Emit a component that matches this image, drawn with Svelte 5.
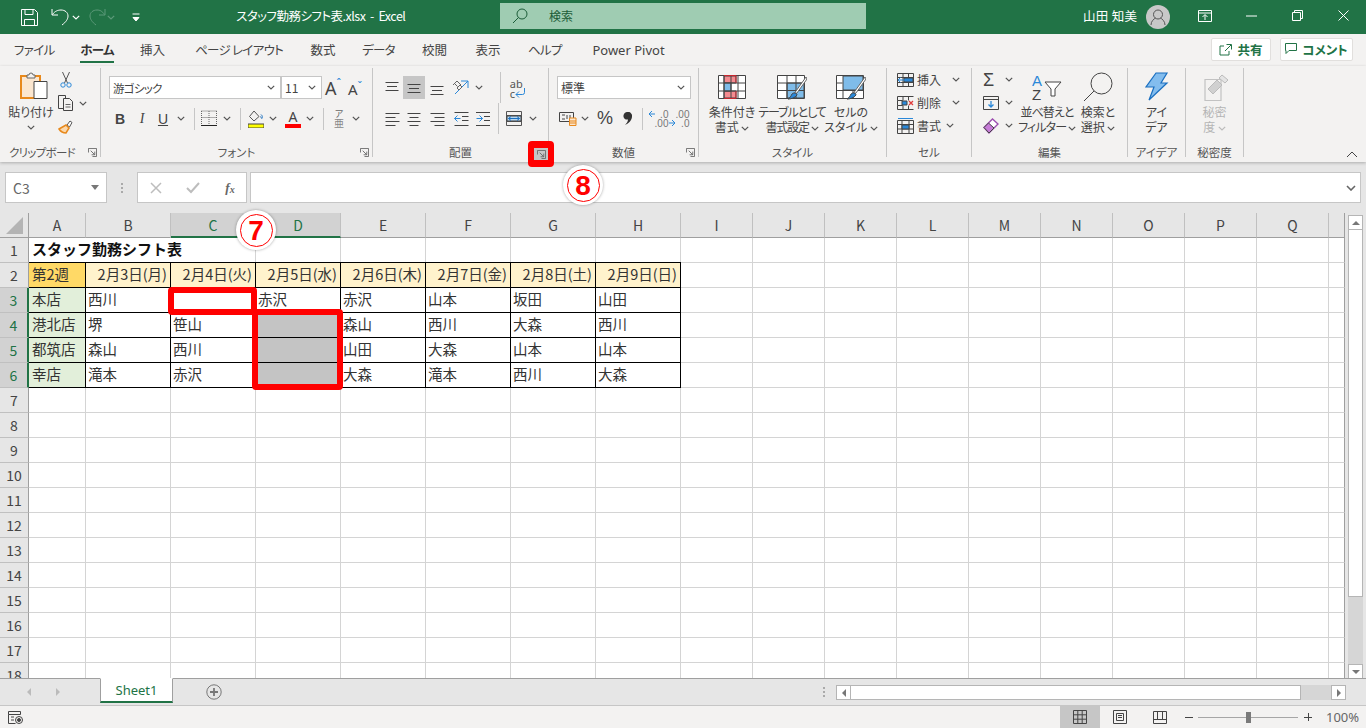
<script>
  const tabs = ['ファイル', 'ホーム', '挿入', 'ページ レイアウト', '数式', 'データ', '校閲', '表示', 'ヘルプ', 'Power Pivot'];
  const cols = 'ABCDEFGHIJKLMNOPQ '.split('');
  const rows = Array.from({ length: 18 }, (_, i) => i + 1);

  const table = {
    2: ['第2週', '2月3日(月)', '2月4日(火)', '2月5日(水)', '2月6日(木)', '2月7日(金)', '2月8日(土)', '2月9日(日)'],
    3: ['本店', '西川', '', '赤沢', '赤沢', '山本', '坂田', '山田'],
    4: ['港北店', '堺', '笹山', '', '森山', '西川', '大森', '西川'],
    5: ['都筑店', '森山', '西川', '', '山田', '大森', '山本', '山本'],
    6: ['幸店', '滝本', '赤沢', '', '大森', '滝本', '西川', '大森']
  };

  const cellClass = (r, c) => {
    if (!table[r] || c > 7) return '';
    let cls = 'b';
    if (r === 2) cls += c === 0 ? ' wk' : ' dt';
    else if (c === 0) cls += ' st';
    else if (c === 3 && r > 3) cls += ' gr';
    return cls;
  };
</script>

{#snippet chev(cls = '')}
  <svg class="chev {cls}" width="8" height="5" viewBox="0 0 8 5"><path d="M.8.8 4 4 7.2.8" /></svg>
{/snippet}

{#snippet launcher()}
  <svg class="launch" width="9" height="9" viewBox="0 0 10 10"><path d="M.5 5V.5h9v9H5M3 3l4.500 4.500M7.500 4v3.500H4" /></svg>
{/snippet}

{#snippet lines(kind)}
  <svg width="16" height="16" viewBox="0 0 16 16" class="ln">
    {#if kind === 'top'}<path d="M1.500 2.500h13M3 6.500h10M1.500 10.500h13" />{/if}
    {#if kind === 'mid'}<path d="M1.500 4.500h13M3 8.500h10M1.500 12.500h13" />{/if}
    {#if kind === 'bot'}<path d="M1.500 6.500h13M3 10.500h10M1.500 14.500h13" />{/if}
    {#if kind === 'l'}<path d="M1.500 2.500h14M1.500 6.500h10M1.500 10.500h14M1.500 14.500h10" />{/if}
    {#if kind === 'c'}<path d="M1.500 2.500h13M3.500 6.500h9M1.500 10.500h13M3.500 14.500h9" />{/if}
    {#if kind === 'r'}<path d="M1.500 2.500h14M5.500 6.500h10M1.500 10.500h14M5.500 14.500h10" />{/if}
  </svg>
{/snippet}

<div class="app">
  <header class="titlebar">
    <div class="qat">
      <svg class="save" width="17" height="17" viewBox="0 0 17 17"><path d="M.5.500h13l3 3v13H.5zM4 .5v5h8v-5M3.500 16.500v-6h10v6" /></svg>
      <svg class="undo" width="20" height="18" viewBox="0 0 20 18"><path d="M1 1v6h6M1.500 6.500C4 3 7 2 10 2c4 0 7 2.500 7 6 0 3-2 6-6 9" /></svg>
      {@render chev('white')}
      <svg class="redo" width="17" height="18" viewBox="0 0 17 18"><path d="M16 1v6h-6M15.500 6.500C13 3 11 2 8 2 4 2 1 4.500 1 8c0 3 2 6 6 9" /></svg>
      {@render chev('dim')}
      <svg class="cust" width="8" height="9" viewBox="0 0 8 9"><path d="M.5 1h7" /><path d="M1 4.500 4 8l3-3.500z" fill="#fff" /></svg>
    </div>
    <div class="doc">スタッフ勤務シフト表.xlsx&nbsp; - &nbsp;Excel</div>
    <div class="search">
      <svg width="16" height="16" viewBox="0 0 16 16"><circle cx="10" cy="6" r="5" /><path d="M6.500 9.500 1 15" /></svg>
      <span>検索</span>
    </div>
    <div class="user">山田 知美</div>
    <div class="avatar">
      <svg width="16" height="16" viewBox="0 0 16 16"><circle cx="8" cy="5.500" r="4.500" /><path d="M1 16c0-4 3-6 4.500-7M15 16c0-4-3-6-4.500-7" /></svg>
    </div>
    <div class="winbtns">
      <svg width="14" height="12" viewBox="0 0 14 12"><path d="M.5.500h13v11H.5zM.5 3h13M7 10V5M4.500 7 7 4.500 9.500 7" /></svg>
      <svg width="11" height="2" viewBox="0 0 11 2"><path d="M0 1h11" /></svg>
      <svg width="11" height="11" viewBox="0 0 11 11"><path d="M.5 2.500h8v8h-8zM2.500 2.500v-2h8v8h-2" /></svg>
      <svg width="11" height="11" viewBox="0 0 11 11"><path d="M.5.500l10 10M10.500.500l-10 10" /></svg>
    </div>
  </header>

  <nav class="tabs">
    {#each tabs as t, i}
      <span class="tab t{i}" class:on={t === 'ホーム'}>{t}</span>
    {/each}
    <div class="share">
      <button class="pill">
        <svg width="13" height="13" viewBox="0 0 13 13"><path d="M7.500 1.500h5v5M12 2 6 8M5 3H1v9h9V8" /></svg>共有
      </button>
      <button class="pill cm">
        <svg width="12" height="12" viewBox="0 0 12 12"><path d="M.5.500h11v7H4l-3 3v-3H.5z" /></svg>コメント
      </button>
    </div>
  </nav>

  <section class="ribbon">
    <div class="g clip">
      <div class="body">
        <div class="big paste">
          <svg width="28" height="30" viewBox="0 0 28 30">
            <path d="M1 4h19v22H1z" fill="#fbe6cf" stroke="#e8891c" stroke-width="2" />
            <path d="M7 4V3h2a2 2 0 0 1 4 0h2v3H7z" fill="#f3f2f1" stroke="#666" />
            <path d="M14 9.500h13v17H14z" fill="#fff" stroke="#444" />
          </svg>
          <span>貼り付け</span>
          {@render chev()}
        </div>
        <div class="cliptools">
          <svg class="scis" width="12" height="17" viewBox="0 0 12 17"><path d="M2.500 1l5 11M9.500 1l-5 11" stroke="#555" /><circle cx="3" cy="14" r="2.200" stroke="#2b88d8" /><circle cx="9" cy="14" r="2.200" stroke="#2b88d8" /></svg>
          <div class="copy">
            <svg width="16" height="16" viewBox="0 0 16 16"><path d="M5.500 13.500h-5v-13h7v3" stroke="#444" /><path d="M5.500 3.500h6l3 3v9h-9z" stroke="#444" fill="#f3f2f1" /><path d="M7.500 9.500h5M7.500 12h5" stroke="#666" /></svg>
            {@render chev()}
          </div>
          <svg width="16" height="16" viewBox="0 0 16 16"><path d="M9 7l3-4 2 1.500-2.500 4.500z" stroke="#555" fill="#fff" /><path d="M1 11l7-4 3 3-3 5c-3 0-5-1-7-4z" fill="#fbd8ac" stroke="#e8891c" stroke-width="1.500" /></svg>
        </div>
      </div>
      <div class="label">クリップボード{@render launcher()}</div>
    </div>

    <div class="g font">
      <div class="body rows">
        <div class="fr1">
          <div class="sel fname"><span>游ゴシック</span>{@render chev()}</div>
          <div class="sel fsize"><span>11</span>{@render chev()}</div>
          <span class="grow">A<sup>ˆ</sup></span>
          <span class="shrink">A<sup>ˇ</sup></span>
        </div>
        <div class="fr2">
          <b class="bi">B</b>
          <i class="bi it">I</i>
          <u class="bi un">U</u>
          {@render chev()}
          <i class="sep"></i>
          <svg width="16" height="17" viewBox="0 0 16 17"><path d="M.5 1h15M.5 1v13M15.500 1v13M8 1v13M.5 7.500h15" stroke="#666" stroke-dasharray="1 1" /><path d="M0 15.500h16" stroke="#222" stroke-width="1" /></svg>
          {@render chev()}
          <i class="sep"></i>
          <svg width="16" height="18" viewBox="0 0 16 18"><path d="M6 1 1.500 6.500 6 11l5-4.500z" stroke="#555" /><path d="M13 4.500c1.500 1 1.500 3 1 4-.5-.5-1.500-1-1.500-2" stroke="#1a6fc0" /><path d="M0 14h16v4H0z" fill="#ffff00" /></svg>
          {@render chev()}
          <span class="colora">A</span>
          {@render chev()}
          <i class="sep"></i>
          <span class="furi">ア<em>亜</em></span>
          {@render chev()}
        </div>
      </div>
      <div class="label">フォント{@render launcher()}</div>
    </div>

    <div class="g align">
      <div class="body rows">
        <div class="ar1">
          {@render lines('top')}
          <span class="hl">{@render lines('mid')}</span>
          {@render lines('bot')}
          <svg width="17" height="17" viewBox="0 0 17 17"><path d="M9 2h7v7M16 2 3 15" stroke="#2b88d8" /><path d="M1 6l4-4 4 4M2.500 4.500l3 3M5 9l3-3 2 2-3 3z" stroke="#666" /></svg>
          {@render chev()}
          <i class="sep tall"></i>
          <span class="wrap"><span>ab</span><span>c<svg width="11" height="10" viewBox="0 0 11 10"><path d="M9.500 0v4.500a2 2 0 0 1-2 2H1M4 3.500l-3 3 3 3" stroke="#2b88d8" /></svg></span></span>
        </div>
        <div class="ar2">
          {@render lines('l')}
          {@render lines('c')}
          {@render lines('r')}
          <svg width="15" height="14" viewBox="0 0 15 14"><path d="M.5.500h14M8 4.500h6.500M8 8.500h6.500M.5 13.500h14" stroke="#444" /><path d="M.5 6.500h6M3.500 3.500l-3 3 3 3" stroke="#2b88d8" /></svg>
          <svg width="15" height="14" viewBox="0 0 15 14"><path d="M0 .5h14M0 13.500h14M8 4.500h6M8 8.500h6" stroke="#444" /><path d="M.5 6.500h6M3.500 3.500l3 3-3 3" stroke="#2b88d8" /></svg>
          <i class="sep tall"></i>
          <svg width="16" height="15" viewBox="0 0 16 15"><path d="M.5.500h15v14H.5zM.5 4.500h15M.5 10.500h15" stroke="#555" /><path d="M1 5h14v5H1z" fill="#b6d8f3" /><path d="M2.500 7.500h11M5 5.500l-2.500 2 2.500 2M11 5.500l2.500 2-2.500 2" stroke="#1a6fc0" /></svg>
          {@render chev()}
        </div>
      </div>
      <div class="label">配置</div>
    </div>

    <div class="g num">
      <div class="body rows">
        <div class="sel nfmt"><span>標準</span>{@render chev()}</div>
        <div class="nr2">
          <svg width="18" height="15" viewBox="0 0 18 15"><path d="M.5 1.500h14v9H.5z" stroke="#444" /><path d="M3 4h3M3 8h3M8 4v4M11 4v4" stroke="#444" /><path d="M10.500 7h6.500v7.500h-6.500zM10.500 10h6.500M10.500 12h6.500" stroke="#e8891c" fill="#fbe6cf" /></svg>
          {@render chev()}
          <span class="pct">%</span>
          <svg width="9" height="13" viewBox="0 0 9 13"><path d="M4 0a4 4 0 0 1 5 4.500C9 8 6 11.500 2 13c1.500-1.500 3-3.500 3-5.500C2.500 8 0 6 .5 3.500.8 1.500 2.500 0 4 0z" fill="#333" stroke="none" /></svg>
          <i class="sep"></i>
          <span class="dec"><svg width="7" height="8" viewBox="0 0 7 8"><path d="M7 4H1M4 1 1 4l3 3" stroke="#2b88d8" /></svg><em>.0</em><em>.00</em></span>
          <span class="dec inc"><em>.00</em><svg width="7" height="8" viewBox="0 0 7 8"><path d="M0 4h6M3 1l3 3-3 3" stroke="#2b88d8" /></svg><em>.0</em></span>
        </div>
      </div>
      <div class="label">数値{@render launcher()}</div>
    </div>

    <div class="g style">
      <div class="body">
        <div class="big w54">
          <svg width="28" height="30" viewBox="0 0 28 30">
            <path d="M.5 3.500h27v23H.5z" fill="#fff" stroke="#444" />
            <path d="M6 4h12v7H6z M6 19h12v7H6z" fill="#f58b90" />
            <path d="M6 11h7v8H6z" fill="#7fbce9" />
            <path d="M6 3.500v23M13 3.500v23M20 3.500v23M.5 11h27M.5 19h27" stroke="#444" />
            <path d="M6 3.500h12v7.500M6 26.500h12V19" stroke="#c8272e" />
          </svg>
          <span>条件付き</span><span>書式 {@render chev()}</span>
        </div>
        <div class="big w66">
          <svg width="30" height="30" viewBox="0 0 30 30">
            <path d="M.5 3.500h27v23H.5z" fill="#fff" stroke="#444" />
            <path d="M10 11h17v15H10z" fill="#7fbce9" />
            <path d="M10 3.500v23M19 3.500v23M.5 11h27M.5 18.500h27" stroke="#444" />
            <path d="M29 5 19 19l-2 3 3-1L30 7z" fill="#fff" stroke="#666" />
            <path d="M15 22c2-2 5-1 5 1-2 3-6 4-9 4 2-1 3-3 4-5z" fill="#2b88d8" />
          </svg>
          <span>テーブルとして</span><span>書式設定 {@render chev()}</span>
        </div>
        <div class="big w52">
          <svg width="30" height="30" viewBox="0 0 30 30">
            <path d="M.5 3.500h27v23H.5z" fill="#fff" stroke="#444" />
            <path d="M7 4h20v14H7z" fill="#7fbce9" />
            <path d="M7 18.500v8M17 18.500v8M.5 11h6M.5 18.500h27" stroke="#444" />
            <path d="M29 5 19 19l-2 3 3-1L30 7z" fill="#fff" stroke="#666" />
            <path d="M15 22c2-2 5-1 5 1-2 3-6 4-9 4 2-1 3-3 4-5z" fill="#2b88d8" />
          </svg>
          <span>セルの</span><span>スタイル {@render chev()}</span>
        </div>
      </div>
      <div class="label">スタイル</div>
    </div>

    <div class="g cell">
      <div class="body cellrows">
        <div class="crow">
          <svg width="17" height="14" viewBox="0 0 17 14"><path d="M.5.500h16v13H.5zM.5 4.500h16M.5 9.500h16M6 .5v13M11.500.5v13" stroke="#444" /><path d="M7 5h9v4H7z" fill="#2b88d8" /><path d="M8 7H1M3.500 4.500 1 7l2.500 2.500" stroke="#2b88d8" /></svg>
          <span>挿入</span>{@render chev()}
        </div>
        <div class="crow">
          <svg width="17" height="14" viewBox="0 0 17 14"><path d="M.5 4.500h5v5h-5zM.5.500h16M.5 13.500h16M6 .5v4M11.500.5v4M6 9.500v4M11.500 9.500v4M.5.500v4M.5 9.500v4" stroke="#444" /><path d="M5 5h5v4H5z" fill="#2b88d8" /><path d="M12 5l4 4M16 5l-4 4" stroke="#e03c3c" stroke-width="1.300" /></svg>
          <span>削除</span>{@render chev()}
        </div>
        <div class="crow c3">
          <svg width="17" height="16" viewBox="0 0 17 16"><path d="M.5 2.500h16v13H.5zM.5 6.500h16M.5 11h16M5 2.500v13M12 2.500v13" stroke="#444" /><path d="M5 7h7v4H5z" fill="#2b88d8" /><path d="M1 .5h15" stroke="#2b88d8" /></svg>
          <span>書式</span>{@render chev()}
        </div>
      </div>
      <div class="label">セル</div>
    </div>

    <div class="g edit">
      <div class="body">
        <div class="cellrows etools">
          <div class="crow sig"><span class="sigma">Σ</span>{@render chev()}</div>
          <div class="crow">
            <svg width="16" height="14" viewBox="0 0 16 14"><path d="M.5.500h15v13H.5zM.5 3.500h15" stroke="#444" /><path d="M8 5v6M5.500 8.500 8 11l2.500-2.500" stroke="#2b88d8" stroke-width="1.300" /></svg>
            {@render chev()}
          </div>
          <div class="crow">
            <svg width="16" height="16" viewBox="0 0 16 16"><path d="M1 9.500 9.500 1 15 6 6 15z" fill="#fff" stroke="#9c4fb0" stroke-width="1.400" /><path d="M1 9.500 5.500 5 11 10l-5 5z" fill="#c77ad8" /></svg>
            {@render chev()}
          </div>
        </div>
        <div class="big w54 tight">
          <svg width="30" height="30" viewBox="0 0 30 30">
            <text x="0" y="14" class="az blue">A</text>
            <text x="0" y="28" class="az">Z</text>
            <path d="M13 10h16l-6 7v7h-4v-7z" stroke="#444" fill="#fff" />
          </svg>
          <span>並べ替えと</span><span>フィルター {@render chev()}</span>
        </div>
        <div class="big w48">
          <svg width="30" height="30" viewBox="0 0 30 30"><circle cx="18.500" cy="11.500" r="10.500" stroke="#444" /><path d="M11 19 1 29" stroke="#444" /></svg>
          <span>検索と</span><span>選択 {@render chev()}</span>
        </div>
      </div>
      <div class="label">編集</div>
    </div>

    <div class="g idea">
      <div class="body">
        <div class="big full">
          <svg width="24" height="30" viewBox="0 0 24 30"><path d="M11 1h11l-6 10h6L4 28 9 15H1z" fill="#83bdee" stroke="#1a6fc0" stroke-width="1.200" /></svg>
          <span>アイ</span><span>デア</span>
        </div>
      </div>
      <div class="label">アイデア</div>
    </div>

    <div class="g sens">
      <div class="body">
        <div class="big full off">
          <svg width="30" height="30" viewBox="0 0 30 30"><path d="M5 7.500h16v21H5z" stroke="#c2c2c2" stroke-width="1.200" fill="#f3f2f1" /><path d="M8 17 17 8l5 5-9 9z" fill="#d0d0d0" stroke="#bbb" /><path d="M19 6l3-3 6 5-3 3z" fill="#e4e4e4" stroke="#bbb" /></svg>
          <span>秘密</span><span>度 {@render chev('off')}</span>
        </div>
      </div>
      <div class="label">秘密度</div>
    </div>

    <svg class="collapse" width="12" height="7" viewBox="0 0 12 7"><path d="M1 6 6 1l5 5" /></svg>
  </section>

  <section class="fbar">
    <div class="namebox"><span>C3</span><i class="tri"></i></div>
    <div class="dots"><i></i><i></i><i></i></div>
    <div class="fbtns">
      <svg width="12" height="12" viewBox="0 0 12 12"><path d="M1 1l10 10M11 1 1 11" stroke="#bdbdbd" stroke-width="1.500" /></svg>
      <svg width="14" height="12" viewBox="0 0 14 12"><path d="M1 6l4 4 8-9" stroke="#bdbdbd" stroke-width="2" /></svg>
      <span class="fx">f<sub>x</sub></span>
    </div>
    <div class="finput">
      <svg width="10" height="6" viewBox="0 0 10 6"><path d="M1 1l4 4 4-4" stroke="#666" stroke-width="1.600" /></svg>
    </div>
  </section>

  <section class="sheet">
    <div class="grid">
      <div class="hd corner"><i></i></div>
      {#each cols as c, i}
        <div class="hd" class:sel-col={c === 'C' || c === 'D'} class:last={i === 17}>{c}</div>
      {/each}
      {#each rows as r}
        <div class="rh" class:sel-row={r >= 3 && r <= 6}>{r}</div>
        {#if r === 1}
          <div class="c span3 title">スタッフ勤務シフト表</div>
          {#each cols.slice(3) as _, i}<div class="c" class:last={i === 14}></div>{/each}
        {:else}
          {#each cols as _, i}
            <div class="c {cellClass(r, i)}" class:last={i === 17}>{table[r]?.[i] ?? ''}</div>
          {/each}
        {/if}
      {/each}
    </div>
    <aside class="vscroll">
      <div class="sbtn"><i class="up"></i></div>
      <div class="vthumb"></div>
      <div class="vtrack"></div>
      <div class="sbtn"><i class="down"></i></div>
    </aside>
  </section>

  <section class="sheetbar">
    <div class="nav"><i class="al"></i><i class="ar"></i></div>
    <div class="stab">Sheet1</div>
    <svg class="plus" width="16" height="16" viewBox="0 0 16 16"><circle cx="8" cy="8" r="7.200" /><path d="M8 4v8M4 8h8" stroke-width="1.800" /></svg>
    <div class="dots hdots"><i></i><i></i><i></i></div>
    <div class="hscroll">
      <div class="sbtn"><i class="al"></i></div>
      <div class="hthumb"></div>
      <div class="htrack"></div>
      <div class="sbtn"><i class="ar"></i></div>
    </div>
  </section>

  <footer class="status">
    <svg class="macro" width="15" height="13" viewBox="0 0 15 13"><path d="M.5.500h12v3H.5zM.5 3.500v9h7M3 6h3M3 9h3" /><circle cx="11" cy="9" r="3.500" /><circle cx="11" cy="9" r="1.500" fill="#444" /></svg>
    <div class="views">
      <div class="view on"><svg width="14" height="14" viewBox="0 0 14 14"><path d="M.5.500h13v13H.5zM4.800.5v13M9.200.5v13M.5 4.800h13M.5 9.200h13" /></svg></div>
      <div class="view"><svg width="14" height="14" viewBox="0 0 14 14"><path d="M.5.500h13v13H.5zM3.500 3.500h7v7h-7zM5 5.500h4M5 7.500h4" /></svg></div>
      <div class="view"><svg width="14" height="13" viewBox="0 0 14 13"><path d="M.5.500h13v12H.5zM.5 8.500h13M4.500.5v8M9.500.5v8" /></svg></div>
    </div>
    <div class="zoom">
      <span class="zm"></span>
      <div class="slider"><i></i></div>
      <span class="zp"></span>
      <span class="pc">100%</span>
    </div>
  </footer>

  <!-- annotations over the window -->
  <div class="mark m1"></div>
  <div class="mark m2"></div>
  <div class="mark m3">{@render launcher()}</div>
  <div class="badge b7"><span>7</span></div>
  <div class="badge b8"><span>8</span></div>
</div>

<style>
  :global(body) {
    margin: 0;
    background: #e6e6e6;
  }

  .app {
    position: relative;
    width: 1366px;
    height: 728px;
    overflow: hidden;
    display: flex;
    flex-direction: column;
    font-family: 'Noto Sans CJK JP', 'Noto Sans', sans-serif;
    font-size: 12px;
    color: #444;
    font-feature-settings: 'palt';
  }

  svg {
    fill: none;
    stroke: #444;
    display: block;
    flex: none;
  }

  .chev {
    display: inline-block;
    stroke: #555;
    stroke-width: 1.200;
  }

  .chev.white { stroke: #fff; }
  .chev.dim { stroke: #5d9a7a; }
  .chev.off { stroke: #bbb; }

  /* title bar */
  .titlebar {
    height: 34px;
    flex: none;
    background: #217346;
    color: #fff;
    display: flex;
    align-items: center;
    padding-bottom: 3px;
    box-sizing: border-box;
  }

  .qat {
    width: 236px;
    flex: none;
    display: flex;
    align-items: center;
    padding-top: 3px;
    box-sizing: border-box;
  }

  .qat svg { stroke: #fff; }
  .qat .save { margin-left: 21px; }
  .qat .undo { margin-left: 13px; }
  .qat .chev { margin-left: 1px; }
  .qat .redo { margin-left: 9px; stroke: #5d9a7a; }
  .qat .cust { margin-left: 17px; }

  .doc {
    width: 264px;
    flex: none;
    font-size: 12.500px;
    letter-spacing: -.5px;
  }

  .search {
    width: 366px;
    height: 26px;
    flex: none;
    background: #9fccb2;
    color: #1c5c38;
    display: flex;
    align-items: center;
    gap: 21px;
    padding-left: 12px;
    box-sizing: border-box;
    font-size: 12px;
  }

  .search svg { stroke: #1c5c38; }

  .user {
    margin-left: 217px;
    width: 63px;
    flex: none;
    font-size: 12.500px;
    letter-spacing: .3px;
  }

  .avatar {
    width: 24px;
    height: 24px;
    border-radius: 50%;
    background: #c8c8c8;
    flex: none;
    display: flex;
    align-items: center;
    justify-content: center;
    margin-top: 3px;
  }

  .avatar svg { stroke: #555; }

  .winbtns {
    display: grid;
    grid-template-columns: repeat(4, 46px);
    justify-items: center;
    align-items: center;
    margin-left: 12px;
  }

  .winbtns svg { stroke: #fff; }

  /* tabs */
  .tabs {
    height: 32px;
    flex: none;
    background: #f3f2f1;
    display: flex;
    align-items: center;
    font-size: 12.500px;
    position: relative;
    padding-bottom: 1px;
    box-sizing: border-box;
  }

  .tab {
    text-align: center;
    white-space: nowrap;
    position: relative;
    line-height: 24px;
    color: #444;
    letter-spacing: -.7px;
    flex: none;
  }

  .t0 { margin-left: 14px; width: 37px; }
  .t1 { margin-left: 29px; width: 34px; }
  .t2 { margin-left: 26px; width: 25px; letter-spacing: 0; }
  .t3 { margin-left: 30px; width: 85px; }
  .t4 { margin-left: 30px; width: 26px; letter-spacing: 0; }
  .t5 { margin-left: 26px; width: 33px; }
  .t6 { margin-left: 27px; width: 25px; letter-spacing: 0; }
  .t7 { margin-left: 28px; width: 26px; letter-spacing: 0; }
  .t8 { margin-left: 27px; width: 33px; }
  .t9 { margin-left: 30px; width: 75px; letter-spacing: 0; font-family: 'Noto Sans', sans-serif; font-size: 13px; }

  .tab.on {
    font-weight: 700;
    color: #333;
  }

  .tab.on::after {
    content: '';
    position: absolute;
    left: 0;
    right: 0;
    bottom: -1px;
    height: 2px;
    background: #217346;
  }

  .share {
    margin-left: auto;
    margin-right: 13px;
    display: flex;
    gap: 9px;
    padding-bottom: 1px;
  }

  .pill {
    height: 23px;
    width: 60px;
    border: 1px solid #e1dfdd;
    border-radius: 2px;
    background: #fff;
    color: #217346;
    font: 700 12.500px 'Noto Sans CJK JP', sans-serif;
    font-feature-settings: 'palt';
    display: flex;
    align-items: center;
    justify-content: center;
    gap: 5px;
    padding: 0;
  }

  .pill svg { stroke: #217346; }
  .pill.cm { width: 73px; }

  /* ribbon */
  .ribbon {
    height: 96px;
    flex: none;
    background: #f3f2f1;
    display: flex;
    position: relative;
    box-shadow: 0 1px 3px rgba(0, 0, 0, .25);
    z-index: 2;
  }

  .g {
    height: 89px;
    margin-top: 2px;
    border-right: 1px solid #c6c6c6;
    box-sizing: border-box;
    display: flex;
    flex-direction: column;
    position: relative;
  }

  .body {
    flex: 1;
    display: flex;
    min-height: 0;
  }

  .rows {
    flex-direction: column;
    padding: 8px 0 0 8px;
    gap: 8px;
  }

  .label {
    height: 10px;
    line-height: 10px;
    text-align: center;
    font-size: 11.500px;
    color: #555;
    white-space: nowrap;
  }

  .clip .label {
    letter-spacing: -.7px;
    padding-right: 16px;
  }

  .launch {
    position: absolute;
    right: 3px;
    bottom: 0;
    stroke: #666;
  }

  .clip { width: 101px; }
  .font { width: 272px; }
  .align { width: 176px; }
  .num { width: 150px; }
  .style { width: 188px; }
  .cell { width: 85px; }
  .edit { width: 156px; }
  .idea { width: 58px; }
  .sens { width: 58px; }

  .big {
    display: flex;
    flex-direction: column;
    align-items: center;
    padding-top: 4px;
    line-height: 14.500px;
    font-size: 12px;
    white-space: nowrap;
    flex: none;
  }

  .big > svg:first-child {
    margin-bottom: 3px;
  }

  .big .chev { vertical-align: 1px; }

  .w48 { width: 48px; }
  .w52 { width: 52px; }
  .w54 { width: 54px; }
  .w66 { width: 66px; letter-spacing: -1.100px; }
  .tight { letter-spacing: -.9px; }
  .full { width: 100%; }
  .off { color: #b5b5b5; }

  .paste { width: 50px; margin-left: 6px; }
  .paste > svg:first-child { margin-left: 5px; }
  .paste .chev { margin-top: 5px; }

  .cliptools {
    margin-left: 2px;
    padding-top: 3px;
    display: flex;
    flex-direction: column;
    gap: 7px;
  }

  .scis { margin-left: 2px; }

  .copy {
    display: flex;
    align-items: center;
    gap: 5px;
  }

  .style .body { padding-left: 6px; }

  .sel {
    height: 23px;
    box-sizing: border-box;
    background: #fff;
    border: 1px solid #c6c6c6;
    display: flex;
    align-items: center;
    justify-content: space-between;
    padding: 0 5px 0 3px;
    color: #444;
    flex: none;
  }

  .fname { width: 172px; font-size: 11.500px; letter-spacing: -.7px; }
  .fsize { width: 41px; }
  .nfmt { width: 134px; }

  .fr1 {
    display: flex;
    align-items: center;
  }

  .grow, .shrink {
    font-family: 'Noto Sans', sans-serif;
    color: #444;
    line-height: 1;
    display: flex;
  }

  .grow { font-size: 18px; margin-left: 3px; width: 23px; }
  .shrink { font-size: 15px; width: 18px; padding-top: 3px; }

  .grow sup, .shrink sup {
    font-size: 11px;
    color: #2b88d8;
    line-height: 1;
    margin-top: -2px;
  }

  .fr2 {
    display: grid;
    grid-template-columns: 22px 22px 20px 16px 10px 20px 16px 10px 22px 12px 24px 14px 12px 20px 14px;
    justify-items: center;
    align-items: center;
    height: 23px;
  }

  .bi {
    font-family: 'Liberation Sans', sans-serif;
    font-size: 14px;
    color: #444;
    line-height: 1;
  }

  .it { font-family: 'Liberation Serif', serif; }

  .sep {
    width: 1px;
    height: 22px;
    background: #c6c6c6;
    display: block;
  }

  .sep.tall { height: 31px; justify-self: end; }

  .colora {
    font-family: 'Noto Sans', sans-serif;
    font-size: 14px;
    line-height: 14px;
    border-bottom: 4px solid #f00;
    width: 16px;
    text-align: center;
    margin-left: 4px;
    color: #444;
  }

  .furi {
    font-size: 9px;
    line-height: 9px;
    display: flex;
    flex-direction: column;
    align-items: center;
    color: #666;
  }

  .furi em { font-style: normal; font-size: 10px; line-height: 10px; color: #888; }

  .ar1, .ar2 {
    display: grid;
    justify-items: center;
    align-items: center;
    grid-template-rows: 23px;
    height: 23px;
  }

  .ar1 { grid-template-columns: 22px 22px 23px 24px 14px 15px 34px; }
  .ar2 { grid-template-columns: 22px 22px 23px 26px 18px 7px 30px 8px; }

  .hl {
    width: 22px;
    height: 23px;
    background: #c6c6c6;
    display: flex;
    align-items: center;
    justify-content: center;
  }

  .wrap {
    display: flex;
    flex-direction: column;
    font: 11px/9px 'Noto Sans', sans-serif;
    color: #555;
    margin-top: 2px;
  }

  .wrap span { display: flex; align-items: center; }

  .nr2 {
    display: grid;
    grid-template-columns: 22px 12px 28px 17px 12px 20px 22px;
    justify-items: center;
    align-items: center;
    height: 23px;
  }

  .pct {
    font: 18px 'Liberation Sans', sans-serif;
    color: #444;
  }

  .dec {
    display: grid;
    grid-template-columns: 7px auto;
    font: 10px/9px 'Liberation Sans', sans-serif;
    color: #777;
    align-items: center;
    justify-items: end;
  }

  .dec em { font-style: normal; }
  .dec em:last-child { grid-column: 2; }
  .inc em:first-child { grid-column: 2; }
  .inc svg { grid-row: 2; }

  .cellrows {
    display: flex;
    flex-direction: column;
    padding-left: 10px;
  }

  .crow {
    height: 23px;
    display: flex;
    align-items: center;
    gap: 3px;
  }

  .crow .chev { margin-left: 8px; }
  .c3 .chev { margin-left: 2px; }

  .etools { width: 37px; flex: none; box-sizing: content-box; padding-left: 11px; }
  .etools .chev { margin-left: 3px; }

  .sigma {
    font: 18px/1 'Liberation Sans', sans-serif;
    width: 15px;
    color: #444;
  }

  .sig .chev { margin-left: 4px; }

  .az {
    font: 15px 'Liberation Sans', sans-serif;
    fill: #444;
    stroke: none;
  }

  .blue { fill: #2b88d8; }

  .collapse {
    position: absolute;
    right: 8px;
    top: 85px;
    stroke: #444;
  }

  /* formula bar */
  .fbar {
    height: 51px;
    flex: none;
    background: #e6e6e6;
    display: flex;
    align-items: center;
    padding: 0 5px;
    box-sizing: border-box;
  }

  .namebox, .fbtns, .finput {
    height: 31px;
    box-sizing: border-box;
    background: #fff;
    border: 1px solid #c6c6c6;
    display: flex;
    align-items: center;
  }

  .namebox {
    width: 102px;
    justify-content: space-between;
    padding: 0 7px;
    font-size: 14px;
    color: #666;
  }

  .tri {
    border: 4px solid transparent;
    border-top: 5px solid #777;
    border-bottom: 0;
  }

  .dots {
    display: flex;
    flex-direction: column;
    gap: 2px;
    width: 30px;
    align-items: center;
  }

  .dots i {
    width: 2px;
    height: 2px;
    background: #aaa;
  }

  .fbtns {
    width: 110px;
    display: grid;
    grid-template-columns: 36px 38px 36px;
    justify-items: center;
    margin-right: 3px;
  }

  .fx {
    font: italic 700 13px 'Liberation Serif', serif;
    color: #666;
  }

  .fx sub { font-size: 10px; vertical-align: -1px; }

  .finput {
    flex: 1;
    justify-content: flex-end;
    padding-right: 4px;
  }

  /* sheet */
  .sheet {
    height: 465px;
    flex: none;
    display: flex;
    background: #e6e6e6;
  }

  .grid {
    width: 1345px;
    flex: none;
    display: grid;
    grid-template-columns: 29px 57px repeat(7, 85px) repeat(9, 72px) 16px;
    grid-auto-rows: 25px;
    overflow: hidden;
    background: #fff;
    font-size: 14.500px;
    font-feature-settings: normal;
  }

  .hd, .rh {
    background: #e6e6e6;
    color: #444;
    box-sizing: border-box;
    display: flex;
    align-items: center;
    justify-content: center;
    position: relative;
    z-index: 1;
  }

  .hd {
    border-bottom: 1px solid #9f9f9f;
    border-right: 1px solid #c0c0c0;
    font-size: 14px;
  }

  .hd.last { border-right-color: #9f9f9f; }

  .corner {
    border-right: 1px solid #9f9f9f;
    padding: 0;
  }

  .corner i {
    width: 0;
    height: 0;
    border-left: 17px solid transparent;
    border-bottom: 17px solid #b4b4b4;
  }

  .sel-col {
    background: #d2d2d2;
    color: #217346;
    border-bottom: 2px solid #217346;
  }

  .rh {
    border-right: 1px solid #9f9f9f;
    border-bottom: 1px solid #c0c0c0;
    padding-bottom: 1px;
    font-size: 14px;
  }

  .sel-row {
    background: #d2d2d2;
    color: #217346;
    border-right: 2px solid #217346;
  }

  .c {
    box-sizing: border-box;
    border-right: 1px solid #d4d4d4;
    border-bottom: 1px solid #d4d4d4;
    padding: 0 2px 3px;
    display: flex;
    align-items: center;
    white-space: nowrap;
    color: #333;
    min-width: 0;
  }

  .c.last { border-right-color: #9f9f9f; }

  .span3 { grid-column: span 3; }

  .title {
    font-weight: 700;
    color: #111;
    padding-left: 3px;
    font-size: 15px;
  }

  .b {
    border-right-color: #000;
    border-bottom-color: #000;
    box-shadow: 0 -1px #000, -1px 0 #000;
  }

  .wk { background: #ffd966; padding-left: 3px; }
  .dt { background: #fff2cc; justify-content: flex-end; padding-right: 3px; }
  .st { background: #e2efda; padding-left: 3px; }
  .gr { background: #c4c4c4; }

  .vscroll {
    flex: 1;
    display: flex;
    flex-direction: column;
    align-items: center;
    padding: 2px 1px 0 0;
    box-sizing: border-box;
    border-left: 1px solid #e6e6e6;
  }

  .sbtn {
    width: 15px;
    height: 15px;
    flex: none;
    box-sizing: border-box;
    background: #fff;
    border: 1px solid #b5b5b5;
    display: flex;
    align-items: center;
    justify-content: center;
  }

  .vthumb {
    width: 15px;
    height: 367px;
    box-sizing: border-box;
    background: #fff;
    border: 1px solid #b5b5b5;
    border-top: 0;
    flex: none;
  }

  .vtrack {
    width: 15px;
    height: 67px;
    background: #d6d6d6;
    flex: none;
  }

  .up, .down, .al, .ar {
    display: block;
    width: 0;
    height: 0;
    border: 4px solid transparent;
  }

  .up { border-bottom: 4px solid #777; border-top: 0; }
  .down { border-top: 4px solid #777; border-bottom: 0; }
  .al { border-right: 4px solid #777; border-left: 0; }
  .ar { border-left: 4px solid #777; border-right: 0; }

  /* sheet tabs */
  .sheetbar {
    height: 28px;
    flex: none;
    box-sizing: border-box;
    background: #e6e6e6;
    border-top: 1px solid #9f9f9f;
    border-bottom: 1px solid #c6c6c6;
    display: flex;
    align-items: flex-start;
  }

  .nav {
    width: 100px;
    flex: none;
    display: flex;
    gap: 25px;
    padding: 9px 0 0 27px;
    box-sizing: border-box;
  }

  .nav i { border-left-color: #bbb; border-right-color: #bbb; }

  .stab {
    width: 73px;
    height: 25px;
    flex: none;
    box-sizing: border-box;
    margin-top: -1px;
    background: #fff;
    border: 1px solid #9f9f9f;
    border-top-color: #fff;
    border-bottom: 2px solid #217346;
    color: #217346;
    font: 13px/23px 'Noto Sans', sans-serif;
    text-align: center;
  }

  .plus {
    margin: 5px 0 0 33px;
    stroke: #777;
  }

  .hdots {
    width: 8px;
    margin: 8px 0 0 598px;
  }

  .hscroll {
    display: flex;
    margin: 6px 0 0 8px;
  }

  .hthumb {
    width: 450px;
    height: 15px;
    box-sizing: border-box;
    background: #fff;
    border: 1px solid #b5b5b5;
    border-left: 0;
  }

  .htrack {
    width: 30px;
    height: 15px;
    background: #d6d6d6;
  }

  /* status */
  .status {
    height: 22px;
    flex: none;
    background: #f3f2f1;
    display: flex;
    align-items: center;
  }

  .macro {
    margin-left: 8px;
  }

  .views {
    margin-left: 1037px;
    display: flex;
  }

  .view {
    width: 40px;
    height: 22px;
    display: flex;
    align-items: center;
    justify-content: center;
  }

  .view.on { background: #c6c6c6; }

  .zoom {
    margin-left: 5px;
    display: flex;
    align-items: center;
  }

  .zm, .zp {
    position: relative;
    width: 8px;
    height: 1px;
    background: #444;
  }

  .zp::after {
    content: '';
    position: absolute;
    left: 3.500px;
    top: -3.500px;
    width: 1px;
    height: 8px;
    background: #444;
  }

  .slider {
    width: 100px;
    height: 1px;
    background: #a6a6a6;
    margin: 0 6px 0 5px;
    display: flex;
    align-items: center;
    justify-content: center;
  }

  .slider i {
    width: 5px;
    height: 11px;
    background: #7a7a7a;
  }

  .pc {
    margin-left: 14px;
    font: 13px 'Noto Sans', sans-serif;
    color: #666;
  }

  /* annotations */
  .mark {
    position: absolute;
    box-sizing: border-box;
    border: 6px solid #f00;
    border-radius: 4px;
    z-index: 5;
  }

  .m1 { left: 168px; top: 287px; width: 89px; height: 28px; }
  .m2 { left: 252px; top: 309px; width: 91px; height: 81px; }

  .m3 {
    left: 528px;
    top: 141px;
    width: 26px;
    height: 26px;
    border-width: 7px 6px;
    background: #c6c6c6;
  }

  .m3 .launch { right: 2px; bottom: 1px; }

  .badge {
    position: absolute;
    width: 40px;
    height: 40px;
    box-sizing: border-box;
    border-radius: 50%;
    background: #fff;
    box-shadow: 0 0 3px rgba(0, 0, 0, .35);
    z-index: 6;
    display: flex;
    align-items: center;
    justify-content: center;
  }

  .badge span {
    width: 33px;
    height: 33px;
    box-sizing: border-box;
    border-radius: 50%;
    border: 1px solid #f00;
    color: #f00;
    font: 700 28px/31px 'Liberation Sans', sans-serif;
    text-align: center;
  }

  .b7 { left: 236px; top: 210px; }
  .b8 { left: 563px; top: 165px; }
</style>
